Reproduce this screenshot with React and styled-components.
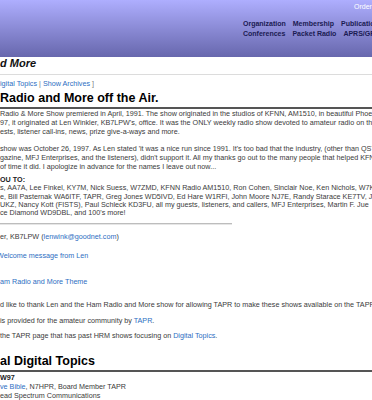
import styled, { createGlobalStyle } from "styled-components"

const GlobalStyle = createGlobalStyle`
    body {
        margin: 0;
        background: #fff;
        overflow: hidden;
        font-family: "Liberation Sans", Arial, sans-serif;
        color: #3a3a3a;
    }
`

const Banner = styled.header`
    height: 57px;
    box-sizing: border-box;
    padding-top: 2px;
    background: linear-gradient(#aeaefe, #6767ad);
    white-space: nowrap;
`

const TopLink = styled.div`
    padding-left: 354px;
    font-size: 7px;
    line-height: 9px;
    color: #fff;
`

const Nav = styled.nav`
    margin-top: 8px;
    padding-left: 243px;
    display: flex;
    flex-direction: column;
`

const NavRow = styled.div`
    display: flex;
    gap: 7px;
    line-height: 10px;
`

const NavItem = styled.span`
    font-size: 7px;
    font-weight: bold;
    color: #1b1b52;
`

const Content = styled.main`
    white-space: nowrap;
    font-size: 7.2px;
`

const PageTitle = styled.div`
    font-size: 11px;
    line-height: 13px;
    font-weight: bold;
    font-style: italic;
    color: #111;
`

const Divider = styled.div`
    margin-top: 4px;
    border-top: 1px solid #dcdcdc;
`

const Crumbs = styled.div`
    margin-top: 4px;
    line-height: 9px;
    color: #777;
`

const A = styled.a`
    color: #2d6ec2;
    text-decoration: none;
    margin-left: ${p => p.$shift || 0}px;
`

const Heading = styled.h2`
    margin: ${p => p.$top}px 0 0;
    padding-bottom: 2px;
    font-size: 12.5px;
    line-height: 14px;
    color: #000;
    border-bottom: 2px solid #555;
`

const Para = styled.p`
    margin: ${p => p.$top}px 0 0;
    line-height: ${p => p.$lh || 9}px;
`

const Strong = styled.b`
    color: #222;
`

const ShortRule = styled.div`
    margin-top: 6px;
    width: 232px;
    border-top: 1px solid #bdbdbd;
    border-bottom: 1px solid #e6e6e6;
`

const App = () => {
    return (
        <>
            <GlobalStyle />
            <Banner>
                <TopLink>Order Online</TopLink>
                <Nav>
                    <NavRow>
                        <NavItem>Organization</NavItem>
                        <NavItem>Membership</NavItem>
                        <NavItem>Publications</NavItem>
                    </NavRow>
                    <NavRow>
                        <NavItem>Conferences</NavItem>
                        <NavItem>Packet Radio</NavItem>
                        <NavItem>APRS/GPS</NavItem>
                    </NavRow>
                </Nav>
            </Banner>
            <Content>
                <PageTitle>d More</PageTitle>
                <Divider />
                <Crumbs>
                    <A href="#">igital Topics</A> | <A href="#">Show Archives</A> ]
                </Crumbs>
                <Heading $top={3}>Radio and More off the Air.</Heading>
                <Para $top={0}>
                    Radio &amp; More Show premiered in April, 1991. The show originated in the studios of KFNN, AM1510, in beautiful Phoenix<br />
                    97, it originated at Len Winkler, KB7LPW's, office. It was the ONLY weekly radio show devoted to amateur radio on the air<br />
                    ests, listener call-ins, news, prize give-a-ways and more.
                </Para>
                <Para $top={8}>
                    show was October 26, 1997. As Len stated 'it was a nice run since 1991. It's too bad that the industry, (other than QST<br />
                    gazine, MFJ Enterprises, and the listeners), didn't support it. All my thanks go out to the many people that helped KFNN<br />
                    of time it did. I apologize in advance for the names I leave out now...
                </Para>
                <Para $top={5} $lh={8.3}>
                    <Strong>OU TO:</Strong><br />
                    s, AA7A, Lee Finkel, KY7M, Nick Suess, W7ZMD, KFNN Radio AM1510, Ron Cohen, Sinclair Noe, Ken Nichols, W7KN<br />
                    e, Bill Pasternak WA6ITF, TAPR, Greg Jones WD5IVD, Ed Hare W1RFI, John Moore NJ7E, Randy Starace KE7TV, Joe<br />
                    UKZ, Nancy Kott (FISTS), Paul Schleck KD3FU, all my guests, listeners, and callers, MFJ Enterprises, Martin F. Jue<br />
                    ce Diamond WD9DBL, and 100's more!
                </Para>
                <ShortRule />
                <Para $top={7}>
                    er, KB7LPW (<A href="#">lenwink@goodnet.com</A>)
                </Para>
                <Para $top={10}>
                    <A href="#" $shift={-3}>Welcome message from Len</A>
                </Para>
                <Para $top={17}>
                    <A href="#">am Radio and More Theme</A>
                </Para>
                <Para $top={14}>
                    d like to thank Len and the Ham Radio and More show for allowing TAPR to make these shows available on the TAPR web site.
                </Para>
                <Para $top={7}>
                    is provided for the amateur community by <A href="#">TAPR</A>.
                </Para>
                <Para $top={6}>
                    the TAPR page that has past HRM shows focusing on <A href="#">Digital Topics</A>.
                </Para>
                <Heading $top={14}>al Digital Topics</Heading>
                <Para $top={1}>
                    <Strong>W97</Strong><br />
                    <A href="#">ve Bible</A>, N7HPR, Board Member TAPR<br />
                    ead Spectrum Communications
                </Para>
            </Content>
        </>
    )
}

export default App
